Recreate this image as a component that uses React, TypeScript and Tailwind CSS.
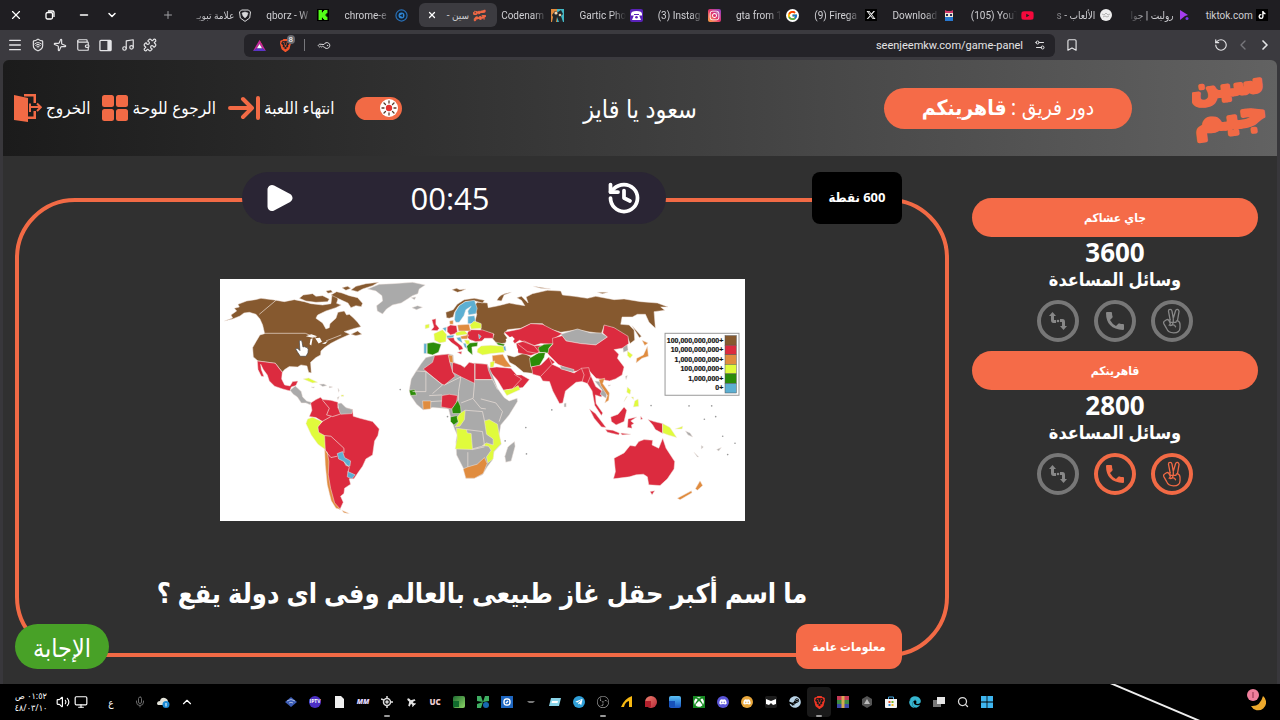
import type { ReactNode } from "react";
import {
  Bookmark, ChevronDown, ChevronLeft, ChevronRight, ChevronUp, History, KeyRound, Menu, Mic, Minus, Monitor,
  Music, Plus, Puzzle, RotateCcw, Search, Settings2, Shield, Sparkle, Volume2, Wallet, Wifi, X,
} from "lucide-react";
import {
  FaDiscord, FaEdge, FaInstagram, FaPlane, FaSteam, FaTelegramPlane, FaTiktok, FaXbox, FaYoutube,
} from "react-icons/fa";
import { FaXTwitter } from "react-icons/fa6";
import { FcGoogle } from "react-icons/fc";
import { SiBrave, SiKick, SiObsstudio } from "react-icons/si";

const BROWN = "#86592f";
const RED = "#dc2b3f";
const ORANGE = "#e08c3f";
const YELLOW = "#e0fb3c";
const GREEN = "#2b8c08";
const BLUE = "#5cafd2";
const GREY = "#aaaaaa";

/* ---------- Browser tabs ---------- */

type Tab = { title: string; icon: ReactNode; rtl?: boolean; active?: boolean; whole?: boolean };

const tabs: Tab[] = [
  { title: "علامة تبويـ", rtl: true, icon: <ShieldLion /> },
  { title: "qborz - W", icon: <SiKick className="size-3 bg-black p-px text-[#53fc18]" /> },
  {
    title: "chrome-e",
    icon: (
      <svg viewBox="0 0 14 14" className="size-[13px]">
        <circle cx="7" cy="7" r="6" fill="#14212f" stroke="#2a6fb5" strokeWidth="1.3" />
        <circle cx="7" cy="7" r="3.2" fill="#2f86d6" />
        <path d="M8.500 5v4L5 7z" fill="#14212f" />
      </svg>
    ),
  },
  { title: "سين -", rtl: true, active: true, whole: true, icon: <Wordmark small /> },
  {
    title: "Codenam",
    icon: (
      <svg viewBox="0 0 13 13" className="size-[13px]">
        <path d="M0 0h7v13H0z" fill="#e08a3c" />
        <path d="M6 0h7v13H6z" fill="#43b7c4" />
        <path d="M1 13l1-5-1-2 3-4 3 1 3-2 2 4-2 2 2 6H8L6 8l-1 5z" fill="#20262a" />
        <circle cx="5" cy="4" r="1.600" fill="#f3d6b0" />
        <circle cx="9" cy="6" r="1.300" fill="#e2c8a0" />
      </svg>
    ),
  },
  {
    title: "Gartic Pho",
    icon: (
      <svg viewBox="0 0 13 13" className="size-[13px]">
        <rect width="13" height="13" rx="2" fill="#5a22b8" />
        <path d="M1 5q0-3 5.500-3T12 5v1.500H9V5H4v1.500H1zM4 6h5l2 5H2z" fill="#fff" />
        <circle cx="6.500" cy="8.300" r="1.300" fill="#5a22b8" />
      </svg>
    ),
  },
  {
    title: "(3) Instag",
    icon: (
      <span className="rounded-xs bg-linear-to-tr from-[#fca63a] via-[#e1306c] to-[#8a3ac8] p-px">
        <FaInstagram className="size-[11px] text-white" />
      </span>
    ),
  },
  { title: "gta from 1", icon: <span className="rounded-full bg-white p-px"><FcGoogle className="size-[11px]" /></span> },
  { title: "(9) Firega", icon: <FaXTwitter className="size-3 bg-black p-px text-white" /> },
  {
    title: "Download",
    icon: (
      <svg viewBox="0 0 12 12" className="size-3">
        <path d="M2 1l2 1h4l2-1v3H2z" fill="#d0396b" />
        <path d="M2 4h8v4H2z" fill="#f2ead8" />
        <path d="M3 5h2v2H3zM7 5h2v2H7z" fill="#2b2b55" />
        <path d="M2 8h8v4H2z" fill="#2878d0" />
      </svg>
    ),
  },
  { title: "(105) YouT", icon: <FaYoutube className="size-[13px] text-[#f5093c]" /> },
  {
    title: "الألعاب - s",
    rtl: true,
    icon: (
      <svg viewBox="0 0 12 12" className="size-3">
        <circle cx="6" cy="6" r="6" fill="#eee" />
        <path d="M2 5l2 1 2-2 2 2 2-1M3 8l2-1 2 1 2-1" stroke="#999" strokeWidth=".7" fill="none" />
      </svg>
    ),
  },
  {
    title: "روليت | جوا",
    rtl: true,
    icon: (
      <svg viewBox="0 0 12 12" className="size-3">
        <path d="M2 1l8 5-3 1-5 4z" fill="#a63df0" />
        <circle cx="9" cy="9.500" r="1.500" fill="#7a36e8" />
      </svg>
    ),
  },
  { title: "tiktok.com", whole: true, icon: <FaTiktok className="size-3 bg-black p-0.5 text-white" /> },
];

function ShieldLion() {
  return (
    <svg viewBox="0 0 12 13" className="h-[13px] w-3" fill="none" stroke="#d8d8da">
      <path d="M2.500 1h7l2 2-.8 6L6 12.400 1.300 9 .5 3z" />
      <path d="M3 4l3-1 3 1-1 3-2 2-2-2z" fill="#d8d8da" strokeWidth=".5" />
    </svg>
  );
}

function BrowserTab({ title, icon, rtl, active, whole }: Tab) {
  const fade = whole ? "" : rtl ? "mask-l-from-60%" : "mask-r-from-70%";
  return (
    <li className={active ? "min-w-0 flex-1 rounded-md bg-[#3c3b40]" : "min-w-0 flex-1"}>
      <a href="#tab" className="flex h-6 items-center gap-1 pr-[11px] pl-1 text-[#cfcfd3]">
        {active && <X className="ml-1 size-2.5 shrink-0 text-white" strokeWidth={3} />}
        <span dir={rtl ? "rtl" : "ltr"} className={`min-w-0 flex-1 text-[10px] whitespace-nowrap ${fade}`}>
          {title}
        </span>
        <span className="flex w-[13px] shrink-0 justify-center">{icon}</span>
      </a>
    </li>
  );
}

function IconButton({ label, children }: { label: string; children: ReactNode }) {
  return (
    <button type="button" aria-label={label} className="flex size-[14px] items-center justify-center">
      {children}
    </button>
  );
}

function TabStrip() {
  return (
    <div className="flex h-[30px] items-center bg-[#1f1e22] font-[Roboto,'DejaVu_Sans_Condensed','DejaVu_Sans',sans-serif] text-white">
      <div className="flex w-[184px] shrink-0 items-center pl-[9px]">
        <IconButton label="إغلاق"><X className="size-3.5" /></IconButton>
        <div className="w-5" />
        <IconButton label="استعادة">
          <svg viewBox="0 0 10 10" className="size-2.5" fill="none" stroke="white" strokeWidth="1.300">
            <rect x="1" y="2.500" width="6.500" height="6.500" rx="1.500" />
            <path d="M3 1h4.500Q9 1 9 2.500V7" />
          </svg>
        </IconButton>
        <div className="w-5" />
        <IconButton label="تصغير"><Minus className="size-3" strokeWidth={3} /></IconButton>
        <div className="w-[14px]" />
        <IconButton label="بحث في علامات التبويب"><ChevronDown className="size-3" strokeWidth={3} /></IconButton>
        <div className="w-[42px]" />
        <IconButton label="علامة تبويب جديدة"><Plus className="size-3 text-[#a0a0a4]" /></IconButton>
      </div>
      <ul className="flex min-w-0 flex-1">
        {tabs.map((t) => <BrowserTab key={t.title} {...t} />)}
      </ul>
    </div>
  );
}

function Toolbar() {
  return (
    <div className="flex h-[30px] items-center bg-[#3b3a3f] px-2 font-[Roboto,sans-serif] text-[#e4e4e6]">
      <div className="flex w-[236px] shrink-0">
        <div className="flex w-[149px] items-center justify-between">
          <IconButton label="القائمة"><Menu className="size-4 shrink-0" /></IconButton>
          <IconButton label="VPN">
            <span className="relative flex">
              <Shield className="size-3.5" />
              <Wifi className="absolute top-[3px] left-[3px] size-2" strokeWidth={3} />
            </span>
          </IconButton>
          <IconButton label="Leo"><Sparkle className="size-3.5 rotate-12" /></IconButton>
          <IconButton label="المحفظة"><Wallet className="size-3.5" /></IconButton>
          <IconButton label="الشريط الجانبي">
            <svg viewBox="0 0 14 13" className="size-[13px]">
              <rect x="1" y="1" width="12" height="11" rx="1" fill="none" stroke="currentColor" strokeWidth="1.400" />
              <path d="M9 1h4v11H9z" fill="currentColor" />
            </svg>
          </IconButton>
          <IconButton label="الوسائط"><Music className="size-3.5" /></IconButton>
          <IconButton label="الإضافات"><Puzzle className="size-3.5" /></IconButton>
        </div>
      </div>
      <div className="flex h-[23px] min-w-0 flex-1 items-center rounded-md bg-[#242328] px-2">
        <div className="flex flex-1 items-center gap-3">
          <IconButton label="المكافآت">
            <svg viewBox="0 0 14 12" className="size-[13px]">
              <path d="M7 0l3.500 6L7 5z" fill="#f0502a" />
              <path d="M7 0l7 12-4-2.500L7 4 4 9.500 0 12z" fill="#c5289b" />
              <path d="M0 12h14l-4-3H4z" fill="#5a35c8" />
              <path d="M7 4.500L9.800 9H4.200z" fill="#fff" />
            </svg>
          </IconButton>
          <IconButton label="دروع Brave">
            <span className="relative">
              <SiBrave className="size-[13px] text-[#f4552b]" />
              <span className="absolute -top-1 left-2 rounded-sm bg-[#6b6b70] px-0.5 text-[8px] leading-[9px] text-white">8</span>
            </span>
          </IconButton>
          <span className="h-3 w-px bg-[#77777c]" />
          <IconButton label="كلمات المرور"><KeyRound className="size-[11px] rotate-45" /></IconButton>
        </div>
        <label className="flex items-center">
          <span className="sr-only">عنوان الصفحة</span>
          <input
            dir="ltr"
            readOnly
            defaultValue="seenjeemkw.com/game-panel"
            className="h-5 w-[160px] bg-transparent text-right text-[11px] outline-none"
          />
        </label>
        <div className="w-2.5" />
        <IconButton label="إعدادات الموقع"><Settings2 className="size-3 rotate-180" /></IconButton>
      </div>
      <div className="flex w-[217px] shrink-0 items-center justify-between pl-2.5">
        <IconButton label="إشارة مرجعية"><Bookmark className="size-3.5" /></IconButton>
        <div className="flex gap-2">
          <IconButton label="إعادة التحميل"><RotateCcw className="size-3.5" /></IconButton>
          <IconButton label="للأمام"><ChevronLeft className="size-4 shrink-0 text-[#77777c]" /></IconButton>
          <IconButton label="للخلف"><ChevronRight className="size-4 shrink-0" strokeWidth={2.5} /></IconButton>
        </div>
      </div>
    </div>
  );
}

/* ---------- Game header ---------- */

function Wordmark({ small }: { small?: boolean }) {
  return (
    <svg viewBox="0 0 74 74" className={small ? "size-[14px]" : "size-[74px]"} role="img" aria-label="سين جيم">
      <g transform="rotate(-7 37 37)" fill="#f26a45" stroke="#f26a45" strokeWidth="4" strokeLinejoin="round" fontWeight="700" textAnchor="middle" fontFamily="'DejaVu Sans', sans-serif">
        <text x="37" y="24" fontSize="32" direction="rtl">سين</text>
        <text x="37" y="57" fontSize="38" direction="rtl">جيم</text>
      </g>
    </svg>
  );
}

function HeaderLink({ label, children }: { label: string; children: ReactNode }) {
  return (
    <a href="#action" className="flex items-center gap-1 text-[17px] whitespace-nowrap text-white">
      {children}
      <span dir="rtl">{label}</span>
    </a>
  );
}

function GameHeader() {
  return (
    <header className="flex h-24 items-center bg-linear-to-r from-[#1b1b1b] to-[#626262] px-[11px] text-white">
      <div className="flex flex-1 items-center gap-5">
        <nav className="flex items-center gap-3">
          <HeaderLink label="الخروج">
            <svg viewBox="0 0 28 28" className="size-7" fill="#f26a45">
              <path d="M0 0h22v9h-2.500V2.500H10V0zM14 25h8v-8h-2.500v5.500H14z" />
              <path d="M0 1l14 3v24L0 26z" />
              <path d="M16 9.500V18M16.500 13h10M23 9.500l3.800 3.700L23 17" fill="none" stroke="#f26a45" strokeWidth="2" />
            </svg>
          </HeaderLink>
          <HeaderLink label="الرجوع للوحة">
            <svg viewBox="0 0 26 26" className="size-[26px]" fill="#f26a45">
              <rect width="12" height="12" rx="2.500" />
              <rect x="14" width="12" height="12" rx="2.500" />
              <rect y="14" width="12" height="12" rx="2.500" />
              <rect x="14" y="14" width="12" height="12" rx="2.500" />
            </svg>
          </HeaderLink>
          <HeaderLink label="انتهاء اللعبة">
            <svg viewBox="0 0 32 24" className="h-6 w-8" fill="none" stroke="#f26a45" strokeWidth="4" strokeLinecap="round" strokeLinejoin="round">
              <path d="M2 12h22M15 3l9 9-9 9M30 2v20" />
            </svg>
          </HeaderLink>
        </nav>
        <label className="flex cursor-pointer">
          <span className="sr-only">الوضع الليلي</span>
          <input type="checkbox" defaultChecked className="peer sr-only" />
          <span className="flex h-[23px] w-[47px] items-center justify-end rounded-full bg-[#f26a45] px-1">
            <svg viewBox="0 0 18 18" className="size-[18px]">
              <circle cx="9" cy="9" r="9" fill="#fff" />
              <circle cx="9" cy="9" r="3.200" fill="#e2322f" />
              <path d="M9 2v2M9 14v2M2 9h2M14 9h2M4 4l1.500 1.500M12.500 12.500L14 14M4 14l1.500-1.500M12.500 5.500L14 4" stroke="#5b3a2a" strokeWidth="1.300" strokeLinecap="round" />
            </svg>
          </span>
        </label>
      </div>
      <h1 dir="rtl" className="text-[25px] leading-8">سعود يا قايز</h1>
      <div className="flex flex-1 items-center justify-end gap-[60px]">
        <p dir="rtl" className="flex h-[41px] w-[248px] items-center justify-center gap-1 rounded-full bg-[#f56b48] text-[21px] whitespace-nowrap">
          دور فريق : <b>قاهرينكم</b>
        </p>
        <Wordmark />
      </div>
    </header>
  );
}

/* ---------- World map ---------- */

const landShapes: [string, string][] = [
  [BROWN, "M25 138L50 129 45 120 62 108 55 100 70 96 66 88 92 78 118 74 135 70 175 75 205 80 235 74 265 80 285 86 320 90 345 86 348 62 358 58 366 72 362 85 376 90 360 98 330 108 305 120 300 130 320 144 330 162 340 158 342 146 360 130 366 112 385 108 392 120 400 118 412 128 425 142 435 155 410 162 385 170 402 178 370 192 345 205 326 218 315 228 314 240 300 248 284 262 286 294 278 292 273 273 255 270 245 276 220 275 206 284 199 292 190 280 178 265 155 262 126 258 112 246 110 218 120 200 132 180 146 176 140 150 132 132 120 118 100 112 84 114 72 123 50 132z"],
  [BROWN, "M250 70L262 60 290 56 300 64 320 62 340 72 335 80 300 82 270 78zM345 60L362 50 378 54 400 62 425 68 440 85 436 95 420 92 405 98 396 84 378 76zM378 38L395 34 405 40 390 46zM405 45L420 34 450 26 488 22 470 32 440 42 425 50zM330 48L345 45 350 52 336 55zM405 178L425 168 438 178 420 182z"],
  [BROWN, "M708 44L722 40 732 44 750 42 738 48 725 52zM692 128L690 112 712 104 724 88 745 74 775 70 806 76 800 84 778 78 748 80 728 94 716 112 712 126 700 130z"],
  [GREY, "M455 42L490 28 530 26 590 22 628 30 610 42 606 56 590 62 575 72 556 84 530 90 512 102 500 117 484 108 482 92 500 78 498 62 480 48zM588 98L605 92 620 97 602 104zM586 68L600 66 596 74z"],
  [RED, "M124 258L155 262 178 265 190 281 199 292 197 312 206 330 222 333 230 320 246 318 240 332 226 336 222 348 200 342 176 334 160 318 154 300 142 284 134 268 136 284 144 305 136 304 126 284z"],
  [GREY, "M222 346L238 333 256 350 260 366 272 378 286 382 284 390 270 384 256 384 244 366 232 358z"],
  [YELLOW, "M262 312L278 309 305 322 290 324 276 318zM376 360L383 360 383 364 376 364z"],
  [GREY, "M310 328L324 327 333 332 320 335zM286 336L296 336 292 339zM340 334L350 336 340 339zM366 340L370 346 368 352zM370 365L366 374 364 368z"],
  [RED, "M284 384L300 374 314 367 320 374 345 376 366 382 366 400 382 398 410 404 412 424 432 430 470 440 490 462 486 482 476 498 470 540 450 552 440 574 426 594 414 612 400 612 404 628 386 640 384 656 374 664 382 682 372 704 356 690 342 660 334 600 330 530 306 470 304 456 320 440 300 428 280 425 288 406z"],
  [YELLOW, "M275 432L290 427 318 440 306 456 308 472 326 482 328 524 306 508 286 480 270 446z"],
  [GREY, "M366 386L376 384 390 398 410 404 408 416 374 418 368 402z"],
  [ORANGE, "M326 524L334 532 339 560 337 600 344 640 356 684 374 704 360 700 346 678 334 630 328 570zM378 706L400 716 384 714z"],
  [BLUE, "M364 536L380 530 386 548 404 558 402 574 390 572 384 560 368 552zM396 590L418 600 408 612 394 606z"],
  [GREY, "M630 248L655 242 700 237 712 240 714 262 745 276 776 264 815 268 830 300 845 340 865 368 880 378 904 370 905 380 880 420 855 450 850 480 856 508 835 530 830 555 815 575 800 600 775 610 750 610 745 585 722 540 720 500 724 480 716 462 705 430 698 402 680 400 650 398 622 405 602 388 586 365 580 345 586 312 600 290 616 266z"],
  [RED, "M622 282L650 262 656 242 700 237 702 262 710 290 718 304 686 330 678 328zM710 262L735 270 746 278 760 262 776 266 776 325 736 306 710 292zM778 265L814 268 818 286 829 314 778 314zM678 362L700 358 725 362 722 384 708 402 676 396z"],
  [ORANGE, "M697 240L710 242 712 264 702 262zM620 378L645 378 644 402 622 404zM742 582L756 576 784 568 806 548 814 566 802 596 776 610 750 610z"],
  [GREEN, "M726 376L734 394 736 416 710 416 708 402zM704 426L724 422 728 440 714 450 704 440zM580 346L596 344 602 360 584 362z"],
  [YELLOW, "M724 428L734 414 748 406 746 434 732 454 718 456 728 442zM722 460L752 464 754 474 766 476 768 500 770 524 718 522 724 490zM806 438L820 434 845 448 850 478 856 506 834 530 832 552 816 564 812 546 826 526 818 514 800 512 812 504 832 510 832 492 812 478z"],
  [GREY, "M896 500L898 514 886 558 870 562 867 544 876 516z"],
  [BLUE, "M716 134L718 112 730 92 748 80 776 76 784 100 780 116 758 120 756 108 766 94 750 104 744 122 730 142 720 142zM756 124L776 122 780 146 756 146zM624 206L633 206 632 236 624 236zM680 160L692 156 690 170zM692 182L715 180 712 188 694 190z"],
  [RED, "M648 134L660 131 660 148 670 160 664 167 646 166 654 156zM694 156L704 150 722 152 725 174 704 180 694 170zM694 190L714 188 716 196 738 214 742 222 730 226 726 216 706 202zM760 164L800 165 833 176 832 190 806 190 798 198 780 200 762 194 750 184z"],
  [YELLOW, "M628 150L640 147 640 158 628 161zM654 176L680 164 692 178 690 200 672 204 656 196zM762 150L775 138 796 146 796 160 766 162zM718 174L744 164 756 178 722 182zM745 195L760 196 764 212 752 208zM785 222L796 213 825 211 862 214 866 232 826 236 800 240 784 232z"],
  [ORANGE, "M701 138L712 136 712 148 702 148zM725 150L760 148 764 168 728 168zM734 184L758 180 754 192 736 192z"],
  [GREEN, "M634 205L652 202 676 208 668 232 650 240 634 236zM762 204L786 202 784 214 768 216 770 240 756 228 752 214z"],
  [BLUE, "M722 188L734 186 740 204 726 196zM742 204L750 206 754 222 746 216zM788 178L796 184 790 192z"],
  [RED, "M724 232L738 230 736 238z"],
];

const eastShapes: [string, string][] = [
  [BROWN, "M-22 92L-10 82 20 84 22 98 45 94 62 90 85 84 105 88 132 92 122 76 108 68 122 64 142 84 136 66 155 56 200 46 240 48 245 60 280 64 320 70 345 64 400 74 430 72 480 80 530 84 562 96 540 96 552 106 520 110 524 160 505 142 494 118 470 118 455 126 424 126 420 148 445 150 460 165 462 195 448 206 440 186 400 160 370 152 362 176 320 170 290 164 240 172 200 160 185 146 150 146 120 160 80 164 70 176 80 190 74 204 50 208 34 190 40 178 0 166 0 148 -18 140 -12 118z"],
  [BROWN, "M48 76Q55 56 92 52L70 60 62 78zM158 34L210 42 180 40zM350 52L382 52 365 56zM454 152L482 184 476 188zM78 240L100 246 130 234 150 246 150 274 160 296 128 292 104 272 86 262z"],
  [GREY, "M240 178L290 162 330 174 362 174 380 186 345 210 300 206 256 198zM426 214L440 208 442 226 428 232zM434 304L440 302 436 314zM250 386L256 384 256 396 250 396z"],
  [RED, "M70 172L118 162 150 146 185 148 220 166 244 176 222 190 216 208 180 206 160 212 116 196 102 206 86 186zM106 206L130 198 160 212 200 212 176 232 150 242 112 234z"],
  [RED, "M215 190L244 182 256 198 300 206 345 210 380 186 366 174 370 150 400 158 442 184 444 206 424 220 400 224 414 238 410 250 430 276 424 300 404 312 386 318 346 310 322 284 276 290 232 268 206 242 196 230 216 208z"],
  [GREEN, "M146 250L172 234 194 232 190 248 176 272 150 276zM172 218L190 208 216 206 204 220 202 234 176 232zM46 202L72 208 68 214 52 210z"],
  [BLUE, "M60 214L74 214 76 228 66 226z"],
  [ORANGE, "M34 242L66 238 76 256 92 276 72 276 36 262z"],
  [YELLOW, "M28 262L42 258 38 276 28 278z"],
  [RED, "M18 280L48 276 90 280 108 300 122 300 146 314 126 338 94 342 68 346 50 316z"],
  [YELLOW, "M68 346L94 342 112 332 118 344 78 362z"],
  [RED, "M156 298L152 276 180 270 204 246 222 262 214 268 240 280 280 294 302 280 324 278 330 302 345 335 366 350 362 366 344 360 346 386 366 414 362 422 342 392 334 348 320 326 304 320 286 322 254 348 246 384 236 386 216 348 206 320 186 318 178 304z"],
  [GREY, "M238 272L280 284 278 292 240 282zM342 318L358 320 380 348 376 370 358 358 364 346z"],
  [ORANGE, "M354 314L372 310 366 326 386 354 384 376 372 384 380 362 360 332zM484 196L502 204 492 212zM500 214L503 244 484 250 466 264 468 250 488 240zM590 670L632 648 634 654 598 675zM644 642L658 618 666 632 650 646z"],
  [RED, "M326 402L344 416 376 458 362 456 340 430zM374 464L396 466 416 474 414 480 380 472zM390 426L412 418 430 396 438 406 430 440 406 450 392 440zM442 432L468 426 450 438 460 446 452 450 454 460 440 458zM420 474L450 478 424 480zM502 434L520 440 545 446 546 476 524 464 516 450zM480 424L486 432 480 434z"],
  [YELLOW, "M546 446L568 458 588 488 562 480 546 474zM440 336L450 346 448 358 438 352zM436 366L440 364 430 380zM452 366L458 366 458 374zM462 378L472 372 474 394 458 396zM440 228L456 240 448 250 440 242zM584 462L606 454 604 462z"],
  [RED, "M400 550L430 534 448 512 464 514 474 500 490 494 516 496 514 510 534 520 546 490 556 520 582 560 580 582 560 612 538 632 504 630 500 606 488 598 466 600 446 606 398 612 404 590zM508 650L522 648 514 660z"],
  [GREY, "M614 468L628 474 636 486 622 480zM640 532L654 546 650 546zM662 512L668 516 662 522zM708 524L722 518 714 528zM382 330L390 330 384 334z"],
];

const waterShapes =
  "M270 184L286 178 304 184 290 188zM284 192L290 190 286 212 281 208zM298 190L312 188 318 200 308 206zM318 206L336 198 328 207z";
const eastWater = "M74 192L94 184 102 192 94 202 112 224 108 240 92 236 86 212z";

const borders =
  "M180 76L130 118M146 175H268L300 188M330 198L376 180M320 376L340 400 332 420 350 425 372 418M318 440L345 425M326 482L345 484 384 520 384 534M330 530L345 548 364 544M384 560L400 578 396 592M600 288L630 290V350H590M630 290L680 330 650 356M686 330L735 306M735 306L728 350 728 376M776 325L772 370 736 384M772 372L795 400 810 402M748 406L800 410 806 438M752 464L800 470 806 512 770 522M756 532L756 576M770 524L806 516M778 314H830L845 344M795 372L840 384 860 410 850 440M640 362L678 360M645 380L678 378";
const eastBorders =
  "M204 246L214 268 180 304M302 280L310 300 304 320M330 302L320 326M160 212L176 232M112 208L140 230 172 236M100 298L122 312 94 342";

const legend: [string, string][] = [
  ["100,000,000,000+", BROWN],
  ["10,000,000,000+", RED],
  ["1,000,000,000+", ORANGE],
  ["100,000,000+", YELLOW],
  ["1,000,000+", GREEN],
  ["0+", BLUE],
];

const islets = [[213, 405], [135, 458], [137, 537], [73, 498], [511, 392], [625, 393], [693, 393], [705, 425], [671, 433], [726, 484], [763, 505], [741, 539], [-242, 344], [-100, 425]];

function WorldMap() {
  return (
    <svg viewBox="12 12 1576 726" className="w-full bg-white" role="img" aria-label="خريطة العالم">
      <g stroke="#f3e6e0" strokeWidth="1.500" strokeLinejoin="round">
        <g transform="translate(795 0)">
          {eastShapes.map(([fill, d], i) => <path key={i} d={d} fill={fill} />)}
        </g>
        {landShapes.map(([fill, d], i) => <path key={i} d={d} fill={fill} />)}
      </g>
      <path d={waterShapes} fill="#fff" />
      <path d={borders} fill="none" stroke="#f0e4dc" strokeWidth="2" />
      <g transform="translate(795 0)">
        <path d={eastWater} fill="#fff" />
        <path d={eastBorders} fill="none" stroke="#f3c0c0" strokeWidth="2" />
        {islets.map(([x, y]) => <circle key={x} cx={x} cy={y} r="2.500" fill="#999" />)}
        <rect x="553" y="175" width="222" height="186" fill="#fff" stroke="#999" strokeWidth="3" />
        {legend.map(([label, fill], i) => (
          <g key={label}>
            <rect x="733" y={182 + i * 28.7} width="34" height="28.700" fill={fill} stroke="#555" strokeWidth="1.500" />
            <text x="728" y={203 + i * 28.7} textAnchor="end" fontSize="21" fontWeight="700" fontFamily="'Liberation Sans', sans-serif" fill="#111" stroke="#111" strokeWidth=".6">
              {label}
            </text>
          </g>
        ))}
      </g>
      <path
        d="M250 198q5-4 8 1l3 17 4-1 5 2 4 1 3 6-1 10-6 10h-17l-8-12-6-10q4-5 9 1l4 4z"
        fill="#fff"
        stroke="#444"
        strokeWidth="2"
      />
    </svg>
  );
}

/* ---------- Game board ---------- */

function QuestionPanel() {
  return (
    <section className="relative flex min-w-0 flex-1 flex-col items-center justify-between rounded-[60px] border-4 border-[#f26a45] px-5 pt-[77px] pb-9">
      <div className="absolute -top-[30px] left-[223px] flex h-[52px] w-[424px] items-center justify-between rounded-full bg-[#2a2534] px-6 text-white">
        <button type="button" aria-label="تشغيل">
          <svg viewBox="0 0 28 28" className="size-7">
            <path d="M6 5.500v17L22 14z" fill="#fff" stroke="#fff" strokeWidth="9" strokeLinejoin="round" />
          </svg>
        </button>
        <time className="text-[31px]">00:45</time>
        <button type="button" aria-label="إعادة المؤقت"><History className="size-9" strokeWidth={2.5} /></button>
      </div>
      <p dir="rtl" className="absolute -top-[30px] right-[43px] flex h-[52px] w-[90px] items-center justify-center rounded-lg bg-black text-[13px] font-bold text-white">
        600 نقطة
      </p>
      <figure className="w-[525px]"><WorldMap /></figure>
      <h2 dir="rtl" className="text-center text-[27px] leading-[48px] font-bold whitespace-nowrap text-white">
        ما اسم أكبر حقل غاز طبيعى بالعالم وفى اى دولة يقع ؟
      </h2>
      <button type="button" className="absolute -bottom-4 -left-1 h-[45px] w-[94px] rounded-full bg-[#48a127] text-[25px] leading-8 text-white">
        الإجابة
      </button>
      <p dir="rtl" className="absolute right-[43px] -bottom-4 flex h-[45px] w-[106px] items-center justify-center rounded-xl bg-[#f56b48] text-xs font-semibold whitespace-nowrap text-white">
        معلومات عامة
      </p>
    </section>
  );
}

function SwapIcon() {
  return (
    <svg viewBox="0 0 20 20" className="size-5" fill="currentColor">
      <path d="M4.500 1L8 5H6v4h2v3H5.500Q3 12 3 9V5H1zM15.500 19L12 15h2v-4h-2V8h2.500Q17 8 17 11v4h2z" />
      <circle cx="10" cy="10" r="1.300" />
    </svg>
  );
}

function PhoneIcon() {
  return (
    <svg viewBox="3 3 18 18" className="size-[18px]" fill="currentColor">
      <path d="M3 4q0-1 1-1h4q1 0 1 1 0 2 .6 3.600.2.600-.3 1.100L7 11q2.500 4.500 6 6l2.300-2.300q.5-.5 1.100-.3Q18 15 20 15q1 0 1 1v4q0 1-1 1Q3 20 3 4z" />
    </svg>
  );
}

function PeaceIcon() {
  return (
    <svg viewBox="0 0 56 80" className="h-[26px] w-[18px]" fill="none" stroke="currentColor" strokeWidth="4" strokeLinejoin="round" strokeLinecap="round">
      <path d="M22 36L17 9q0-5 5-5t6 5l4 23L39 8q2-5 6-4t5 6l-5 29q8 3 8 12v9q0 17-20 17-17 0-22-14l-8-14q-3-6 2-9l6-4q4-2 7 2l4 7q2 5-3 8" />
      <path d="M22 36q-2 4 1 8h17M32 34v8M45 39q-4 0-5 5M31 46q0 8-9 8M31 52q6 0 8 6" />
    </svg>
  );
}

function Lifeline({ label, on, children }: { label: string; on: boolean; children: ReactNode }) {
  return (
    <button
      type="button"
      aria-label={label}
      className={
        on
          ? "flex size-[42px] items-center justify-center rounded-full border-4 border-[#f26a45] text-[#f26a45]"
          : "flex size-[42px] items-center justify-center rounded-full border-4 border-[#777777] text-[#888888]"
      }
    >
      {children}
    </button>
  );
}

function Team({ name, score, phone, peace }: { name: string; score: number; phone: boolean; peace: boolean }) {
  return (
    <section className="flex flex-col items-center text-white">
      <h3 dir="rtl" className="flex h-[39px] w-full items-center justify-center rounded-full bg-[#f56b48] text-xs font-bold">{name}</h3>
      <p className="text-[26px] leading-[30px] font-bold">{score}</p>
      <p dir="rtl" className="text-[18px] leading-6 font-bold">وسائل المساعدة</p>
      <div className="mt-[9px] flex gap-[15px]">
        <Lifeline label="تبديل" on={false}><SwapIcon /></Lifeline>
        <Lifeline label="اتصال بصديق" on={phone}><PhoneIcon /></Lifeline>
        <Lifeline label="إجابتان" on={peace}><PeaceIcon /></Lifeline>
      </div>
    </section>
  );
}

/* ---------- Taskbar ---------- */

function Tile({ className, children }: { className: string; children?: ReactNode }) {
  return <span className={`flex size-3 items-center justify-center ${className}`}>{children}</span>;
}

const apps: [string, ReactNode][] = [
  ["Sync", <svg viewBox="0 0 12 12" className="size-3"><path d="M0 6l6-5 6 5-6 5z" fill="#3b5cb5" /><path d="M2 5q4-3 8 0M4 7q2-1.500 4 0" stroke="#a8b8e0" fill="none" /></svg>],
  ["Chat", <Tile className="rounded-full bg-[#4b2fc4] text-[5px] font-bold text-white">IPTV</Tile>],
  ["Notes", <svg viewBox="0 0 10 12" className="h-3 w-2.5"><path d="M1 0h6l3 3v9H1z" fill="#f0f0f0" /></svg>],
  ["MM", <span className="text-[7px] font-black text-[#e0d8ff] italic">MM</span>],
  ["Crosshair", <svg viewBox="0 0 12 12" className="size-3" fill="none" stroke="#ddd" strokeWidth="1.500"><circle cx="6" cy="6" r="3.500" /><circle cx="6" cy="6" r="1" /><path d="M0 3l3 1M6 0v2M6 10v2M10 6h2" /></svg>],
  ["Plane", <FaPlane className="size-2.5 -rotate-135 text-[#e4e4e4]" />],
  ["UC", <span className="text-[8px] leading-3 font-black text-[#eecbd0]">UC</span>],
  ["Excel", <Tile className="rounded-xs bg-linear-to-br from-[#1b6d32] to-[#8cd666]"><span className="mt-1 mr-1.5 size-1.5 bg-[#116a2d]" /></Tile>],
  ["Clover", <svg viewBox="0 0 12 12" className="size-3"><path d="M0 0h4l2 6-6-1zM12 0H8L6 6l6-1zM0 12h4l2-6-6 2z" fill="#3fae62" /><circle cx="9" cy="9" r="3" fill="#1768b0" /></svg>],
  ["Link", <Tile className="bg-[#1e66c0]"><svg viewBox="0 0 12 12" className="size-3" fill="none" stroke="#fff" strokeWidth="1.500"><path d="M6 3Q3 2.500 3 6t3 3M6 9q3 .5 3-3T6 3M5 7l2-2" /></svg></Tile>],
  ["Wings", <svg viewBox="0 0 12 12" className="size-3"><path d="M2 5h8l-2 2H4z" fill="#777" /></svg>],
  ["Run", <svg viewBox="0 0 12 12" className="size-3"><path d="M2 2h10l-2 8H0z" fill="#8ad4e8" /><path d="M3 5h6l-.5 2h-6z" fill="#fff" /></svg>],
  ["Telegram", <Tile className="rounded-full bg-[#2f9fd8]"><FaTelegramPlane className="size-2 text-white" /></Tile>],
  ["OBS", <SiObsstudio className="size-3 text-[#b8b8b8]" />],
  ["Rush", <svg viewBox="0 0 12 12" className="size-3"><path d="M0 11Q3 3 11 0v11H8V5Q4 6 3 11z" fill="#f8b912" /></svg>],
  ["PowerPoint", <Tile className="rounded-full bg-linear-to-br from-[#f08070] to-[#b52338]"><span className="mt-1 mr-1.5 size-1.5 bg-[#b3202c]" /></Tile>],
  ["Word", <Tile className="rounded-xs bg-linear-to-b from-[#5cc1f5] to-[#1c51c0]"><span className="mt-1 mr-1.5 size-1.5 bg-[#1750b8]" /></Tile>],
  ["Xbox", <Tile className="bg-[#178a22]"><FaXbox className="size-2.5 text-white" /></Tile>],
  ["Discord", <Tile className="rounded-full bg-[#5a55d8]"><FaDiscord className="size-2 text-white" /></Tile>],
  ["Discord Canary", <Tile className="rounded-full bg-[#e8a73c]"><FaDiscord className="size-2 text-white" /></Tile>],
  ["Mask", <Tile className="rounded-xs bg-[#1c1c1c]"><svg viewBox="0 0 10 6" className="w-2.5" fill="#fff"><path d="M0 0l5 2 5-2v5L7 6 5 4 3 6 0 5z" /></svg></Tile>],
  ["Steam", <FaSteam className="size-3 text-[#b9d3e6]" />],
  ["Brave", <Tile className="rounded-b-md"><SiBrave className="size-[13px] shrink-0 text-[#ee3524]" /></Tile>],
  ["WinRAR", <svg viewBox="0 0 12 12" className="size-3"><path d="M0 0h12v4H0z" fill="#c33a55" /><path d="M0 4h12v4H0z" fill="#3e8a46" /><path d="M0 8h12v4H0z" fill="#3b49a8" /><path d="M4.500 0h3v12h-3z" fill="#d8a853" /></svg>],
  ["Unity", <svg viewBox="0 0 12 12" className="size-3"><path d="M6 0l5 3v6l-5 3-5-3V3z" fill="#555" /><path d="M6 3l3 5H3z" fill="#bbb" /></svg>],
  ["Store", <svg viewBox="0 0 12 12" className="size-3"><path d="M3.500 3V1h5v2" fill="none" stroke="#4aa8e0" /><path d="M0 3h12v8q0 1-1 1H1q-1 0-1-1z" fill="#f4f4f4" /><path d="M3.500 5h2v2h-2z" fill="#e8532b" /><path d="M6.500 5h2v2h-2z" fill="#76b82a" /><path d="M3.500 8h2v2h-2z" fill="#2a8ad8" /><path d="M6.500 8h2v2h-2z" fill="#f3b61f" /></svg>],
  ["Edge", <FaEdge className="size-3 text-[#36b6d0]" />],
  ["عرض المهام", <svg viewBox="0 0 12 12" className="size-3"><path d="M0 4h8v7H0z" fill="#777" /><path d="M4 1h8v7H4z" fill="#e4e4e4" /></svg>],
  ["بحث", <Search className="size-3 text-[#dcdcdc]" strokeWidth={2.5} />],
  ["ابدأ", <svg viewBox="0 0 12 12" className="size-3" fill="#3fb6f0"><path d="M0 0h5.600v5.600H0zM6.400 0H12v5.600H6.400zM0 6.400h5.600V12H0zM6.400 6.400H12V12H6.400z" /></svg>],
];

function Taskbar() {
  return (
    <footer className="flex h-9 items-center bg-black pl-3.5 text-white">
      <div className="flex w-[265px] shrink-0 items-center">
        <p className="w-[34px] text-center text-[9px] leading-3 whitespace-nowrap">
          <span dir="rtl" className="block">٠١:٥٢ ص</span>
          <span className="block">٤٨/٠٣/١٠</span>
        </p>
        <div className="flex flex-1 items-center gap-1 pl-2">
          <Volume2 className="size-3.5" />
          <Monitor className="size-3.5" />
          <span className="w-[38px] text-center text-[10px]">ع</span>
          <Mic className="size-3 text-[#6a6a6a]" />
          <svg viewBox="0 0 14 12" className="ml-1.5 h-3 w-3.5">
            <path d="M1 8q0-3 3-3 1-4 5-3 3 1 3 4v3H2z" fill="#e2e2d8" />
            <circle cx="10" cy="8.500" r="3.500" fill="#1b8bd6" />
            <path d="M10 7v3.500" stroke="#fff" />
          </svg>
          <ChevronUp className="ml-1.5 size-3.5" />
        </div>
      </div>
      <ul className="flex">
        {apps.map(([name, icon]) => (
          <li key={name} className={name === "Brave" ? "rounded-sm bg-[#1a1a1a]" : ""}>
            <button type="button" aria-label={name} className="relative flex h-[30px] w-6 items-center justify-center">
              {icon}
              {(name === "Brave" || name === "OBS" || name === "Crosshair") && (
                <span className="absolute bottom-0 h-0.5 w-1.5 rounded-full bg-[#999]" />
              )}
            </button>
          </li>
        ))}
      </ul>
      <div className="flex flex-1 items-center justify-between pr-3.5 pl-[111px]">
        <svg viewBox="0 0 90 36" className="h-9 w-[90px]"><path d="M0-1L90 37" stroke="#eee" strokeWidth="2" /></svg>
        <svg viewBox="0 0 20 22" className="mb-1 h-[22px] w-5">
          <path d="M17 7a8 8 0 1 1-12 10q9 1 12-10z" fill="#eda92c" />
          <circle cx="7" cy="6" r="6" fill="#f07f9c" />
          <path d="M7 3v6" stroke="#8f2f4c" />
        </svg>
      </div>
    </footer>
  );
}

export default function App() {
  return (
    <div className="flex min-h-screen flex-col bg-[#38373b] font-['Open_Sans','DejaVu_Sans_Condensed','DejaVu_Sans',sans-serif]">
      <TabStrip />
      <Toolbar />
      <div className="mx-[3px] flex flex-1 flex-col overflow-hidden rounded-t-md bg-[#303030]">
        <GameHeader />
        <main className="flex flex-1 gap-[23px] pt-[42px] pr-[19px] pb-[27px] pl-3">
          <QuestionPanel />
          <aside className="flex w-[286px] shrink-0 flex-col gap-[9px]">
            <Team name="جاي عشاكم" score={3600} phone={false} peace={false} />
            <Team name="قاهرينكم" score={2800} phone peace />
          </aside>
        </main>
      </div>
      <Taskbar />
    </div>
  );
}
